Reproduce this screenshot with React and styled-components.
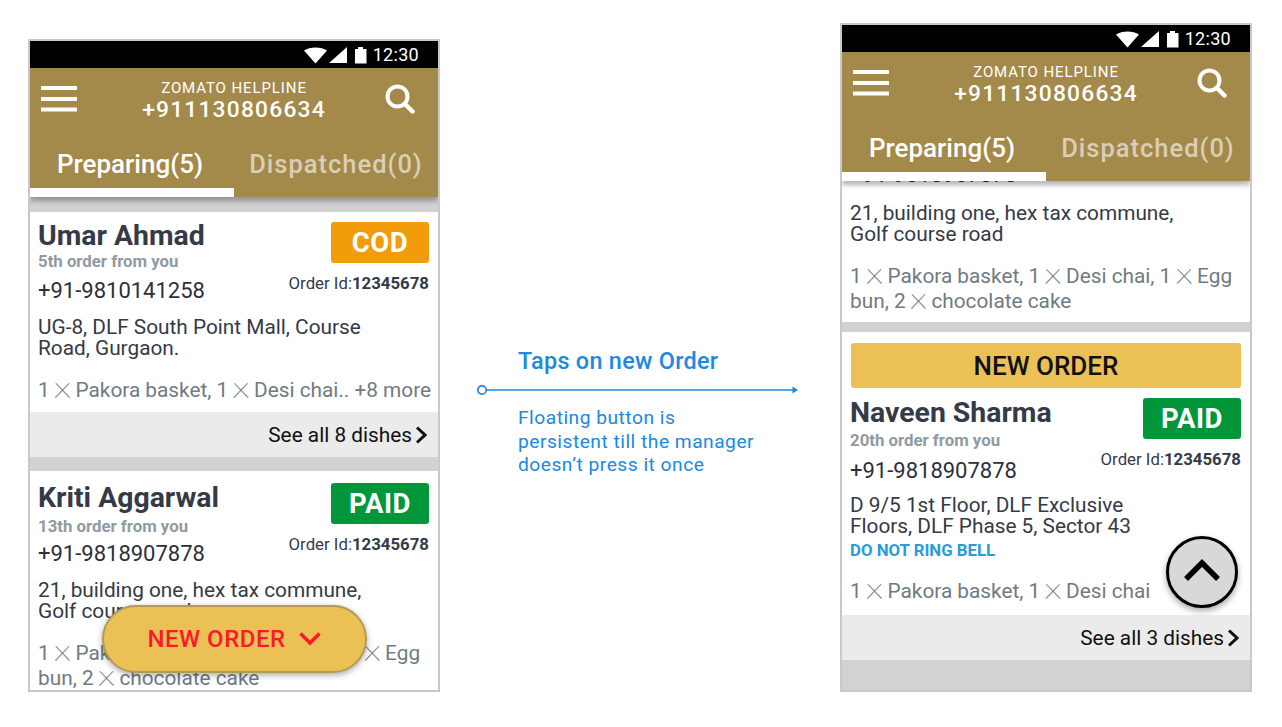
import styled, { createGlobalStyle } from "styled-components";

const GlobalStyle = createGlobalStyle`
  html, body { margin: 0; padding: 0; background: #fff; }
  body { font-family: Roboto, "Liberation Sans", sans-serif; }
  * { box-sizing: border-box; }
`;

const Times = () => <Cross>×</Cross>;

const StatusIcons = () => (
  <svg width="64" height="18" viewBox="0 0 64 18">
    <path d="M0 4.5 C6 0.5 17 0.5 23 4.5 L11.5 17.5 Z" fill="#fff" />
    <path d="M25 17 L43 1 V17 Z" fill="#fff" />
    <path d="M51 3 H54 V1 H59 V3 H62.500 V17.500 H51 Z" fill="#fff" />
  </svg>
);

const Hamburger = () => (
  <svg width="36" height="26" viewBox="0 0 36 26">
    <rect y="0" width="36" height="4" fill="#fff" />
    <rect y="11" width="36" height="4" fill="#fff" />
    <rect y="21.500" width="36" height="4" fill="#fff" />
  </svg>
);

const SearchGlyph = () => (
  <svg width="30" height="30" viewBox="0 0 30 30" fill="none" stroke="#fff" strokeLinecap="round">
    <circle cx="12.500" cy="12.500" r="10" strokeWidth="4" />
    <path d="M20 20 L27.500 27.500" strokeWidth="4.500" />
  </svg>
);

const SeeAllChevron = () => (
  <svg width="12" height="18" viewBox="0 0 12 18" fill="none" stroke="#111" strokeWidth="3">
    <path d="M2 1.500 L10 9 L2 16.500" />
  </svg>
);

const FlowArrow = () => (
  <svg width="322" height="12" viewBox="0 0 322 12" fill="none">
    <circle cx="5" cy="6" r="4.200" stroke="#2088e0" strokeWidth="1.700" />
    <path d="M9 6 H316" stroke="#2088e0" strokeWidth="1.500" />
    <path d="M315.500 2.500 L321 6 L315.500 9.500 Z" fill="#2088e0" />
  </svg>
);

const AppHeader = () => (
  <Header>
    <HeaderRow>
      <Hamburger />
      <Helpline>
        <HelplineLabel>ZOMATO HELPLINE</HelplineLabel>
        <HelplineNumber>+911130806634</HelplineNumber>
      </Helpline>
      <SearchSlot>
        <SearchGlyph />
      </SearchSlot>
    </HeaderRow>
    <Tabs>
      <Tab $active>Preparing(5)</Tab>
      <Tab>Dispatched(0)</Tab>
    </Tabs>
  </Header>
);

const StatusStrip = () => (
  <StatusBar>
    <StatusIcons />
    <StatusTime>12:30</StatusTime>
  </StatusBar>
);

const OrderCard = ({ name, repeat, phone, badge, address, note, children, top, gaps, loose }) => (
  <Card $top={top}>
    <CardHead>
      <CustomerBlock $nameTop={gaps[0]}>
        <CustomerName>{name}</CustomerName>
        <RepeatLine $gap={gaps[1]}>{repeat}</RepeatLine>
        <PhoneLine $gap={gaps[2]}>{phone}</PhoneLine>
      </CustomerBlock>
      <CardMeta>
        <Badge $paid={badge === "PAID"}>{badge}</Badge>
        <OrderId>
          Order Id:<b>12345678</b>
        </OrderId>
      </CardMeta>
    </CardHead>
    <Address $loose={loose}>
      {address[0]}
      <br />
      {address[1]}
    </Address>
    {note && <Note>{note}</Note>}
    <Dishes $loose={loose}>{children}</Dishes>
  </Card>
);

const SeeAll = ({ label }) => (
  <SeeAllBar>
    {label}
    <SeeAllChevron />
  </SeeAllBar>
);

const KritiDishes = () => (
  <>
    1 <Times /> Pakora basket, 1 <Times /> Desi chai, 1 <Times /> Egg
    <br />
    bun, 2 <Times /> chocolate cake
  </>
);

export default function App() {
  return (
    <>
      <GlobalStyle />
      <Stage>
        <Phone $height={653}>
          <StatusStrip />
          <AppHeader />
          <Feed>
            <Divider $height={15} />
            <OrderCard
              top={10}
              gaps={[0, 3, 8]}
              name="Umar Ahmad"
              repeat="5th order from you"
              phone="+91-9810141258"
              badge="COD"
              address={["UG-8, DLF South Point Mall, Course", "Road, Gurgaon."]}
            >
              1 <Times /> Pakora basket, 1 <Times /> Desi chai.. +8 more
            </OrderCard>
            <SeeAll label="See all 8 dishes" />
            <Divider $height={14} />
            <OrderCard
              top={12}
              gaps={[1, 6, 6]}
              name="Kriti Aggarwal"
              repeat="13th order from you"
              phone="+91-9818907878"
              badge="PAID"
              address={["21, building one, hex tax commune,", "Golf course road"]}
            >
              <KritiDishes />
            </OrderCard>
          </Feed>
          <FloatingOrder>
            NEW ORDER
            <svg width="24" height="16" viewBox="0 0 24 16" fill="none" stroke="#fb1a2c" strokeWidth="3.500">
              <path d="M2.500 2.500 L12 12 L21.500 2.500" />
            </svg>
          </FloatingOrder>
        </Phone>

        <Annotation>
          <AnnotationTitle>Taps on new Order</AnnotationTitle>
          <FlowArrow />
          <AnnotationBody>
            Floating button is
            <br />
            persistent till the manager
            <br />
            doesn’t press it once
          </AnnotationBody>
        </Annotation>

        <Phone $height={669}>
          <StatusStrip />
          <AppHeader />
          <Feed>
            <ScrolledCard>
              <PhoneLine $gap={-19} $after={15}>+91-9818907878</PhoneLine>
              <Address>
                21, building one, hex tax commune,
                <br />
                Golf course road
              </Address>
              <Dishes>
                <KritiDishes />
              </Dishes>
            </ScrolledCard>
            <Divider $height={10} />
            <NewOrderBanner>NEW ORDER</NewOrderBanner>
            <OrderCard
              top={10}
              gaps={[1, 5, 9]}
              loose
              name="Naveen Sharma"
              repeat="20th order from you"
              phone="+91-9818907878"
              badge="PAID"
              note="DO NOT RING BELL"
              address={["D 9/5 1st Floor, DLF Exclusive", "Floors, DLF Phase 5, Sector 43"]}
            >
              1 <Times /> Pakora basket, 1 <Times /> Desi chai
            </OrderCard>
            <SeeAll label="See all 3 dishes" />
            <Divider $height={30} />
          </Feed>
          <ScrollTop>
            <svg width="38" height="24" viewBox="0 0 38 24" fill="none" stroke="#000" strokeWidth="5.500">
              <path d="M3 21 L19 5 L35 21" />
            </svg>
          </ScrollTop>
        </Phone>
      </Stage>
    </>
  );
}

// styles
const Stage = styled.div`
  display: flex;
  align-items: flex-end;
  width: 1282px;
  height: 727px;
  padding: 0 0 35px 28px;
  overflow: hidden;
`;

const Phone = styled.div`
  position: relative;
  display: flex;
  flex-direction: column;
  flex: none;
  width: 412px;
  height: ${(props) => props.$height}px;
  border: 2px solid #c9c9c9;
  overflow: hidden;
`;

const StatusBar = styled.div`
  display: flex;
  align-items: center;
  justify-content: flex-end;
  flex: none;
  height: 27px;
  padding-right: 19px;
  gap: 5px;
  background: #000;
`;

const StatusTime = styled.span`
  font-size: 18px;
  color: #fff;
  letter-spacing: 0.3px;
`;

const Header = styled.header`
  position: relative;
  z-index: 2;
  flex: none;
  height: 129px;
  background: #a3894a;
  box-shadow: 0 4px 5px rgba(0, 0, 0, 0.3);
`;

const HeaderRow = styled.div`
  display: grid;
  grid-template-columns: 1fr auto 1fr;
  align-items: center;
  height: 62px;
  padding: 0 11px;
`;

const SearchSlot = styled.div`
  display: flex;
  justify-content: flex-end;
  padding-right: 12px;
`;

const Helpline = styled.div`
  display: flex;
  flex-direction: column;
  align-items: center;
  padding-top: 3px;
  color: #fff;
`;

const HelplineLabel = styled.span`
  font-size: 15px;
  line-height: 18px;
  letter-spacing: 0.9px;
`;

const HelplineNumber = styled.span`
  font-size: 22.800px;
  line-height: 25px;
  font-weight: 500;
  letter-spacing: 1.2px;
`;

const Tabs = styled.div`
  display: grid;
  grid-template-columns: 204px 204px;
  height: 67px;
`;

const Tab = styled.div`
  display: flex;
  align-items: center;
  justify-content: center;
  padding: 10px ${(props) => (props.$active ? "4px" : "0")} 0 0;
  border-bottom: 9px solid ${(props) => (props.$active ? "#fff" : "transparent")};
  font-size: ${(props) => (props.$active ? "26px" : "25.500px")};
  font-weight: 500;
  letter-spacing: ${(props) => (props.$active ? "0" : "1px")};
  color: ${(props) => (props.$active ? "#fff" : "rgba(255, 255, 255, 0.6)")};
  white-space: nowrap;
`;

const Feed = styled.div`
  flex: 1;
  min-height: 0;
  overflow: hidden;
  background: #fff;
`;

const Divider = styled.div`
  height: ${(props) => props.$height}px;
  background: #d2d2d2;
`;

const Card = styled.article`
  padding: ${(props) => props.$top}px 9px 0 8px;
  background: #fff;
`;

const ScrolledCard = styled.article`
  height: 160px;
  padding: 0 9px 0 8px;
  background: #fff;
`;

const CardHead = styled.div`
  display: flex;
  justify-content: space-between;
`;

const CustomerBlock = styled.div`
  padding-top: ${(props) => props.$nameTop}px;
`;

const CustomerName = styled.div`
  font-size: 28.400px;
  line-height: 27px;
  font-weight: 700;
  color: #343a46;
`;

const RepeatLine = styled.div`
  margin-top: ${(props) => props.$gap}px;
  font-size: 16.800px;
  line-height: 18px;
  font-weight: 700;
  color: #8f9aa3;
`;

const PhoneLine = styled.div`
  margin-top: ${(props) => props.$gap}px;
  margin-bottom: ${(props) => props.$after || 0}px;
  font-size: 22px;
  line-height: 26px;
  color: #2b303a;
`;

const CardMeta = styled.div`
  display: flex;
  flex-direction: column;
  align-items: flex-end;
`;

const Badge = styled.div`
  display: flex;
  align-items: center;
  justify-content: center;
  width: 98px;
  height: 41px;
  border-radius: 3px;
  font-size: 27.500px;
  font-weight: 700;
  letter-spacing: 0.5px;
  color: #fff;
  background: ${(props) => (props.$paid ? "#009639" : "#f39c0a")};
`;

const OrderId = styled.div`
  margin-top: 11px;
  font-size: 16.800px;
  line-height: 19px;
  color: #343a46;
  b { font-weight: 700; }
`;

const Address = styled.div`
  margin-top: ${(props) => (props.$loose ? "11px" : "13px")};
  font-size: 20.800px;
  line-height: 21px;
  color: #343a46;
`;

const Note = styled.div`
  margin-top: 3px;
  font-size: 16.800px;
  line-height: 20px;
  font-weight: 700;
  color: #2b9bd8;
`;

const Dishes = styled.div`
  margin-top: 19px;
  padding-bottom: ${(props) => (props.$loose ? "11px" : "9px")};
  font-size: 20.800px;
  line-height: 25px;
  color: #6f7b83;
  white-space: nowrap;
`;

const Cross = styled.span`
  margin: 0 -1.500px;
  font-size: 36px;
  font-weight: 100;
  line-height: 0;
  vertical-align: -1px;
`;

const SeeAllBar = styled.div`
  display: flex;
  align-items: center;
  justify-content: flex-end;
  gap: 3px;
  height: 45px;
  padding-right: 11px;
  font-size: 20.800px;
  color: #111;
  background: #ebebeb;
`;

const FloatingOrder = styled.div`
  position: absolute;
  left: 72px;
  top: 564px;
  display: flex;
  align-items: center;
  justify-content: center;
  gap: 12px;
  width: 265px;
  height: 68px;
  border: 2px solid #b39b56;
  border-radius: 34px;
  background: #ebc156;
  box-shadow: 0 2px 6px rgba(0, 0, 0, 0.35);
  font-size: 24px;
  font-weight: 500;
  letter-spacing: 0.5px;
  color: #fb1a2c;
`;

const NewOrderBanner = styled.div`
  display: flex;
  align-items: center;
  justify-content: center;
  height: 45px;
  margin: 11px 9px 0;
  border-radius: 3px;
  background: #ebc156;
  font-size: 26px;
  font-weight: 500;
  color: #111;
`;

const ScrollTop = styled.div`
  position: absolute;
  left: 324px;
  top: 511px;
  display: flex;
  align-items: center;
  justify-content: center;
  width: 72px;
  height: 72px;
  padding-bottom: 4px;
  border: 3.500px solid #000;
  border-radius: 50%;
  background: #d8d8d8;
  box-shadow: 0 3px 6px rgba(0, 0, 0, 0.35);
`;

const Annotation = styled.div`
  align-self: flex-start;
  flex: none;
  width: 400px;
  padding: 347px 0 0 37px;
  color: #2088e0;
`;

const AnnotationTitle = styled.div`
  margin: 0 0 6px 41px;
  font-size: 23.400px;
  line-height: 28px;
  font-weight: 500;
  letter-spacing: 0.3px;
`;

const AnnotationBody = styled.div`
  margin: 6px 0 0 41px;
  font-size: 19.200px;
  line-height: 23.500px;
  letter-spacing: 0.5px;
`;
